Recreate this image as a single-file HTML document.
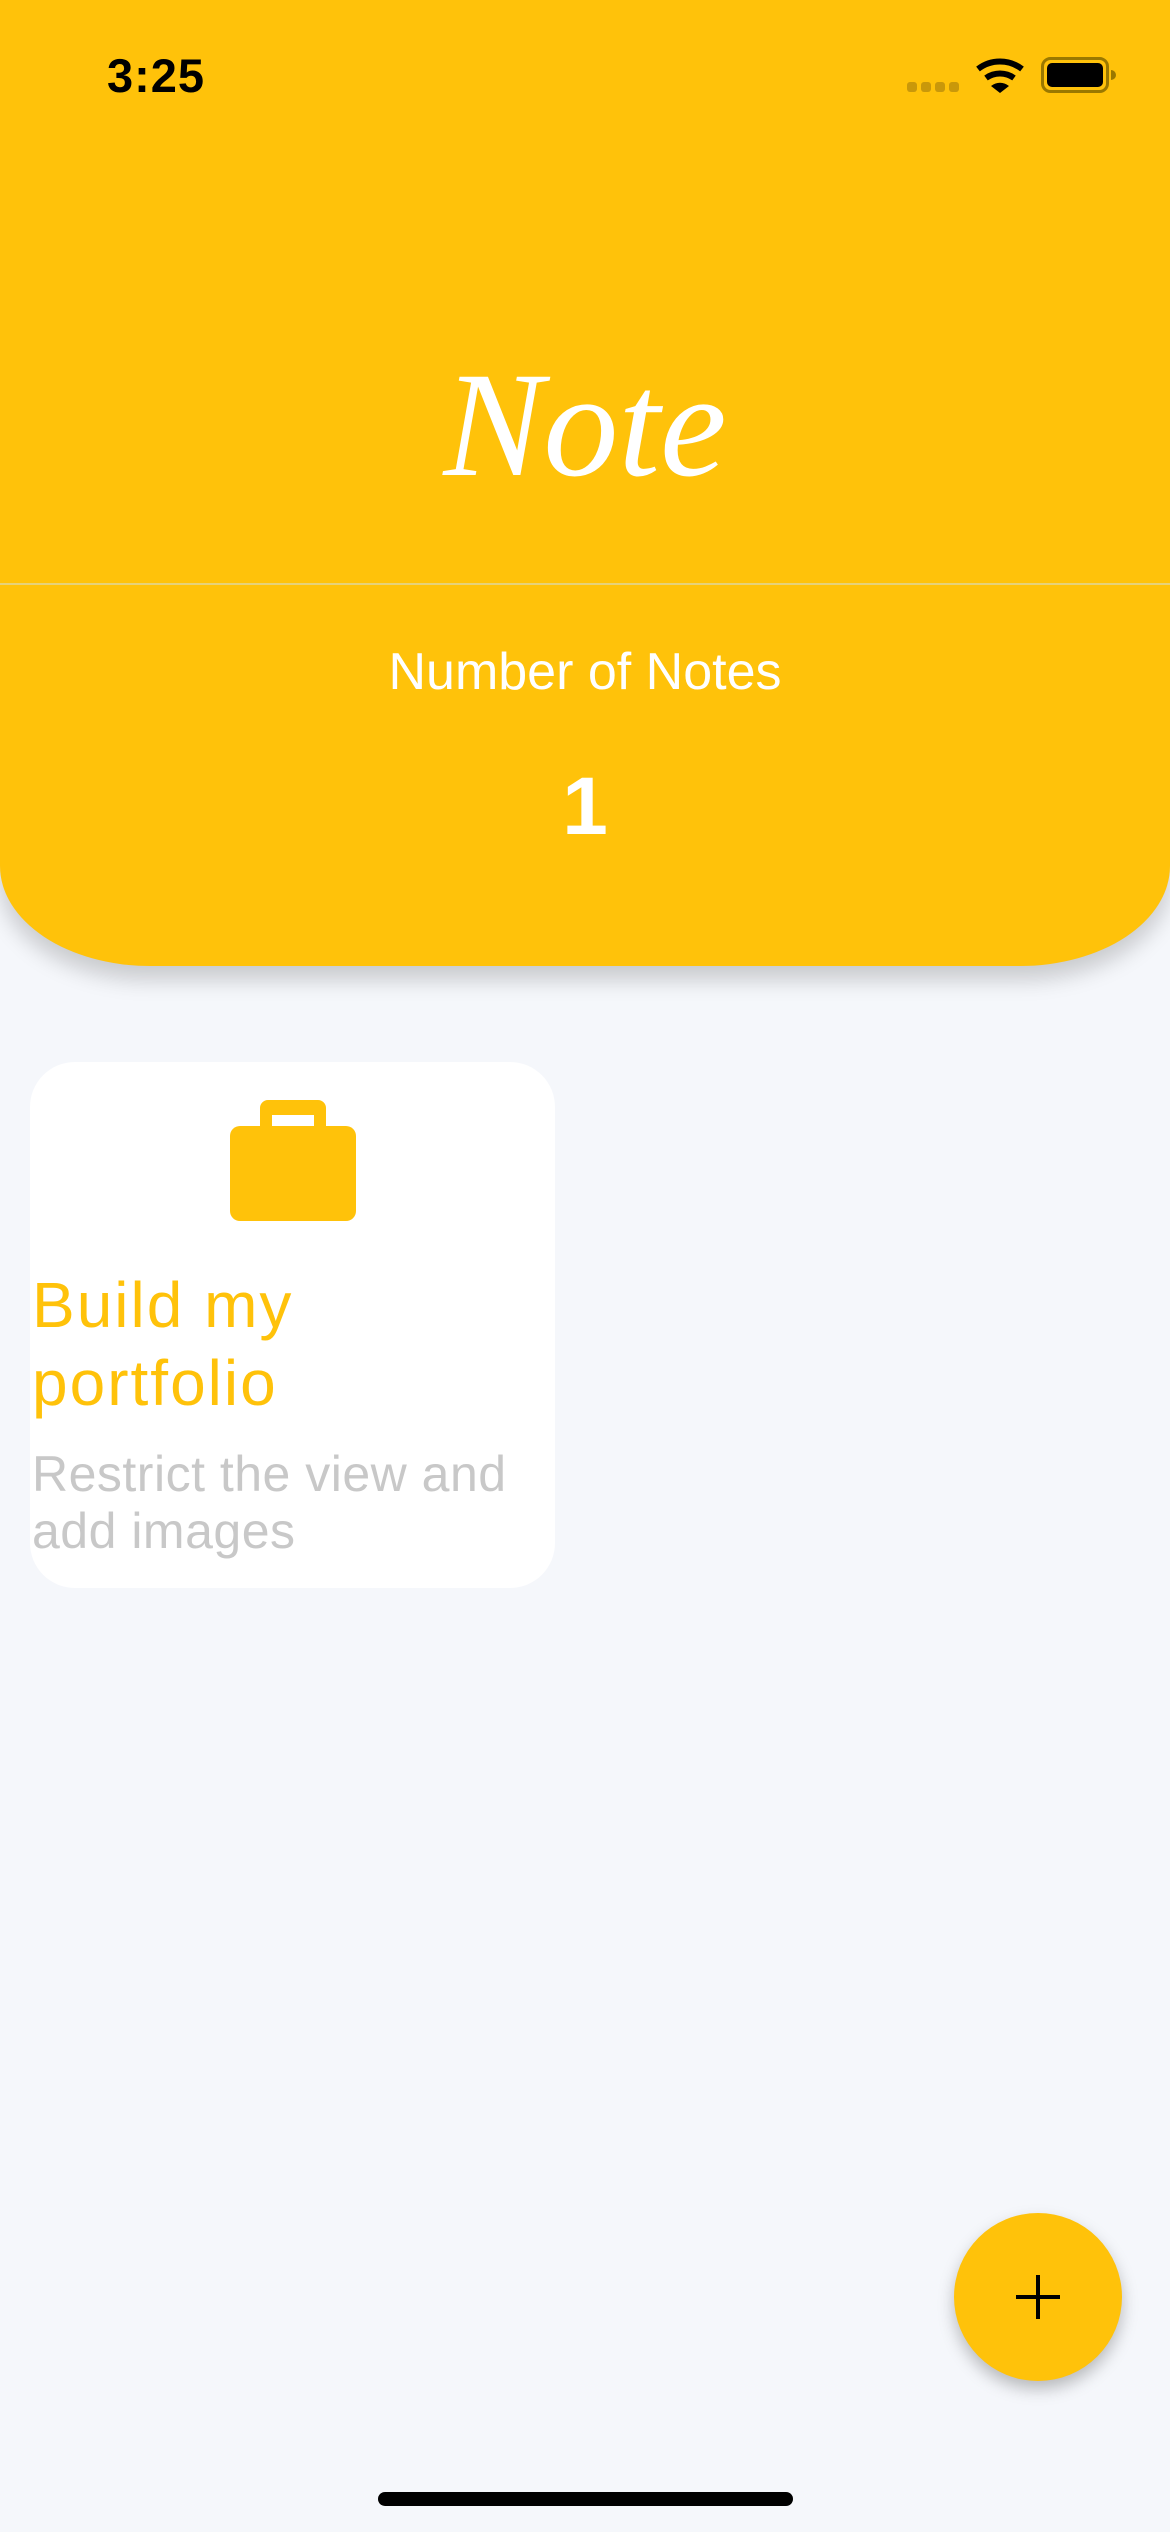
<!DOCTYPE html>
<html><head><meta charset="utf-8"><style>
*{margin:0;padding:0;box-sizing:border-box}
body{width:1170px;height:2532px;background:#F5F7FB;font-family:"Liberation Sans",sans-serif;position:relative;overflow:hidden}
.hdr{position:absolute;left:0;top:0;width:1170px;height:966px;background:#FFC20A;border-radius:0 0 150px 150px/0 0 100px 100px;box-shadow:0 14px 22px rgba(0,0,0,0.18)}
.line{position:absolute;left:0;top:583px;width:1170px;height:2px;background:#E6D27A}
.time{position:absolute;left:107px;top:48px;font-size:47px;font-weight:bold;color:#000;letter-spacing:1px}
.note{position:absolute;left:0;width:1170px;top:350px;text-align:center;font-family:"Liberation Serif",serif;font-style:italic;font-size:150px;color:#fff;line-height:1}
.non{position:absolute;left:0;width:1170px;top:642px;text-align:center;font-size:52px;color:#fff}
.one{position:absolute;left:0;width:1170px;top:760px;text-align:center;font-size:82px;font-weight:bold;color:#fff}
.card{position:absolute;left:30px;top:1062px;width:525px;height:526px;background:#fff;border-radius:45px}
.t{position:absolute;left:32px;top:1266px;font-size:64px;line-height:78px;color:#FFC20A;letter-spacing:2px}
.s{position:absolute;left:32px;top:1446px;font-size:50px;line-height:57px;color:#C8C8C8;width:540px;letter-spacing:0.5px}
.fab{position:absolute;left:954px;top:2213px;width:168px;height:168px;border-radius:50%;background:#FFC20A;box-shadow:0 8px 16px rgba(0,0,0,0.25)}
.home{position:absolute;left:378px;top:2492px;width:415px;height:14px;border-radius:7px;background:#000}
</style></head><body>
<div class="hdr"></div>
<div class="line"></div>
<div class="time">3:25</div>
<svg style="position:absolute;left:900px;top:50px" width="230" height="50" viewBox="900 50 230 50">
<g fill="#C9980A"><rect x="907" y="82" width="10" height="10" rx="3"/><rect x="921" y="82" width="10" height="10" rx="3"/><rect x="935" y="82" width="10" height="10" rx="3"/><rect x="949" y="82" width="10" height="10" rx="3"/></g>
<g fill="none" stroke="#000" stroke-width="6" stroke-linecap="butt"><path d="M978 69 A36 36 0 0 1 1022 69"/><path d="M986 78 A24 24 0 0 1 1014 78"/></g>
<path d="M991 86 L1000 93 L1009 86 A14 14 0 0 0 991 86Z" fill="#000"/>
<rect x="1042.5" y="58.5" width="65" height="33" rx="8" fill="none" stroke="#9A7800" stroke-width="3"/>
<rect x="1047" y="63" width="56" height="24" rx="5" fill="#000"/>
<path d="M1111 70 a5 5 0 0 1 0 10z" fill="#9A7800"/>
</svg>
<div class="note">Note</div>
<div class="non">Number of Notes</div>
<div class="one">1</div>
<div class="card"></div>
<svg style="position:absolute;left:230px;top:1100px" width="126" height="121" viewBox="0 0 126 121">
<path d="M38 0 H88 a8 8 0 0 1 8 8 V26 H84 V15 H42 V26 H30 V8 a8 8 0 0 1 8-8Z" fill="#FFC20A"/>
<rect x="0" y="26" width="126" height="95" rx="10" fill="#FFC20A"/>
</svg>
<div class="t">Build my<br>portfolio</div>
<div class="s">Restrict the view and add images</div>
<div class="fab"><svg width="168" height="168"><path d="M84 62V106M62 84H106" stroke="#000" stroke-width="4"/></svg></div>
<div class="home"></div>
</body></html>
